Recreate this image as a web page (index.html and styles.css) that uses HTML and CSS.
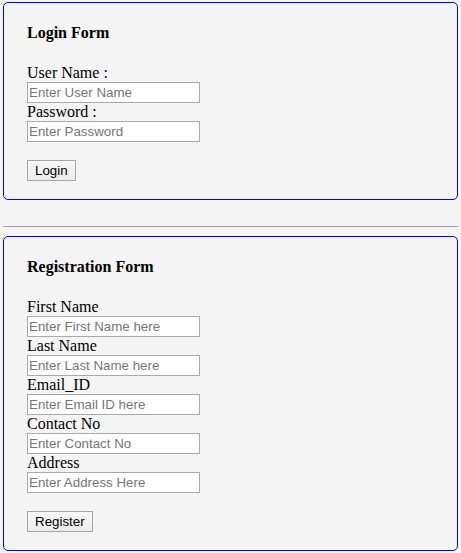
FILE: index.html
```html
<!DOCTYPE html>
<html>
<head>
<meta charset="utf-8">
<link rel="stylesheet" href="styles.css">
</head>
<body>
<div class="box">
  <h4 class="title">Login Form</h4>
  <label class="lbl">User Name :</label>
  <input class="field" type="text" placeholder="Enter User Name">
  <label class="lbl">Password :</label>
  <input class="field" type="password" placeholder="Enter Password">
  <div class="actions"><button class="btn">Login</button></div>
</div>
<hr class="sep">
<div class="box">
  <h4 class="title">Registration Form</h4>
  <label class="lbl">First Name</label>
  <input class="field" type="text" placeholder="Enter First Name here">
  <label class="lbl">Last Name</label>
  <input class="field" type="text" placeholder="Enter Last Name here">
  <label class="lbl">Email_ID</label>
  <input class="field" type="text" placeholder="Enter Email ID here">
  <label class="lbl">Contact No</label>
  <input class="field" type="text" placeholder="Enter Contact No">
  <label class="lbl">Address</label>
  <input class="field" type="text" placeholder="Enter Address Here">
  <div class="actions"><button class="btn">Register</button></div>
</div>
</body>
</html>
```
FILE: styles.css
```css
html, body {
  background: #f4f4f4;
}
body {
  margin: 2px 3px;
  font-family: "Liberation Serif", "Times New Roman", serif;
  font-size: 16px;
  color: #000;
}
.box {
  border: 1px solid #0000ff;
  border-radius: 5px;
  padding: 21px 23px 18px;
  background: #f4f4f4;
}
.title {
  margin: 0 0 22px;
  font-size: 16px;
  line-height: 18px;
  font-weight: bold;
}
.lbl {
  display: block;
  line-height: 18px;
  height: 18px;
}
.field {
  display: block;
  box-sizing: border-box;
  width: 173px;
  height: 21px;
  margin: 0;
  padding: 0 1px;
  border: 1px solid #a9a9a9;
  background: #fff;
  font-family: "Liberation Sans", Arial, sans-serif;
  font-size: 13.33px;
  color: #000;
  outline: none;
}
.field::placeholder {
  color: #757575;
  opacity: 1;
}
.actions {
  padding-top: 18px;
  display: flex;
}
.btn {
  box-sizing: border-box;
  height: 21px;
  margin: 0;
  padding: 0 7px;
  border: 1px solid #a6a6a6;
  border-radius: 0;
  background: linear-gradient(#f8f8f8, #ececec);
  font-family: "Liberation Sans", Arial, sans-serif;
  font-size: 13.33px;
  line-height: 19px;
  color: #000;
}
.sep {
  margin: 26px 0 9px;
  border: 0;
  border-top: 1px solid #a0a0a0;
  height: 0;
}
```
